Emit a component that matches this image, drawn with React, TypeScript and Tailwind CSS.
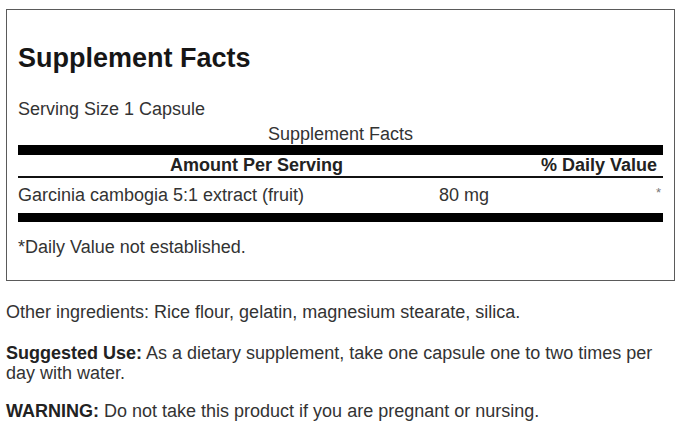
export default function App() {
  return (
    <div className="w-[679px] h-[430px] bg-white overflow-hidden text-[#333] font-['Liberation_Sans',Arial,sans-serif]">
      <div className="mt-[9px] ml-[6px] w-[669px] border-[1.5px] border-[#5a5a5a] pl-[11px] pr-[11px] pt-[32px] pb-[22px]">
        <h1 className="text-[27px] leading-[32px] font-bold text-[#161616]">Supplement Facts</h1>

        <p className="mt-[24px] text-[18px] leading-[22px]">Serving Size 1 Capsule</p>
        <p className="mt-[3px] text-[18px] leading-[22px] text-center">Supplement Facts</p>

        <div className="h-[10px] bg-black" />

        <div className="flex text-[18px] leading-[21px] font-bold text-[#222]">
          <span className="w-[325px] text-right">Amount Per Serving</span>
          <span className="flex-1 text-right pr-[6px]">% Daily Value</span>
        </div>
        <div className="h-[2px] bg-[#111]" />

        <div className="flex items-start pt-[6px] pb-[7px] text-[18px] leading-[22px]">
          <span className="w-[421px]">Garcinia cambogia 5:1 extract (fruit)</span>
          <span>80 mg</span>
          <span className="flex-1 text-right text-[13px] leading-[18px] text-[#777] pr-[2px]">*</span>
        </div>

        <div className="h-[9px] bg-black" />

        <p className="mt-[14px] text-[18px] leading-[22px]">*Daily Value not established.</p>
      </div>

      <div className="mx-[6px] text-[18px] leading-[20.5px]">
        <p className="mt-[21px]">Other ingredients: Rice flour, gelatin, magnesium stearate, silica.</p>
        <p className="mt-[20px]">
          <span className="font-bold text-[#222]">Suggested Use:</span>{' '}
          <span>As a dietary supplement, take one capsule one to two times per</span>{' '}
          <span>day with water.</span>
        </p>
        <p className="mt-[17px]">
          <span className="font-bold text-[#222]">WARNING:</span> Do not take this product if you are pregnant or nursing.
        </p>
      </div>
    </div>
  );
}
